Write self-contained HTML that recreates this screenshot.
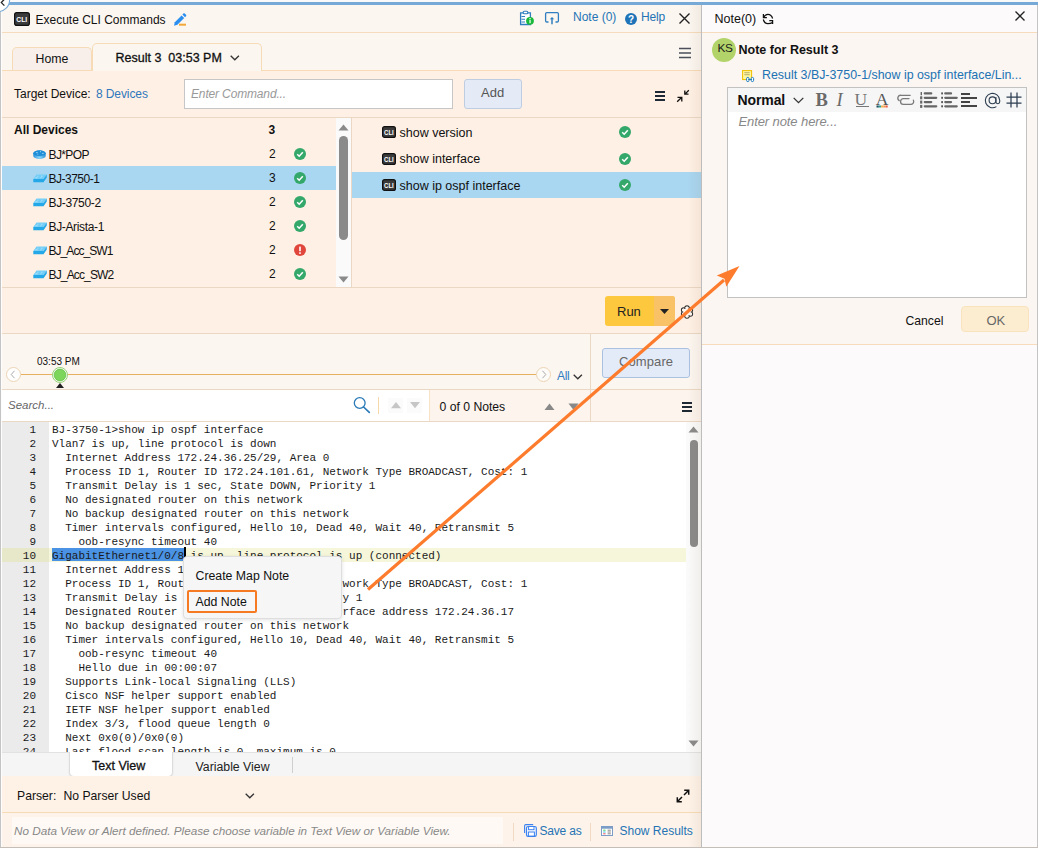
<!DOCTYPE html>
<html><head><meta charset="utf-8">
<style>
*{box-sizing:border-box;margin:0;padding:0}
html,body{width:1038px;height:848px;overflow:hidden;background:#fff;font-family:"Liberation Sans",sans-serif;font-size:12px;color:#1a1a1a;position:relative}
.a{position:absolute}
.t{position:absolute;white-space:pre;line-height:1}
svg{position:absolute;overflow:visible}
</style></head><body>
<div class="a" style="left:0px;top:0px;width:1038px;height:2px;background:#f9f9f9;"></div>
<div class="a" style="left:0px;top:2px;width:1038px;height:3px;background:#77a9d6;"></div>
<div class="a" style="left:0px;top:5px;width:702px;height:843px;background:#fbf6f0;"></div>
<div class="a" style="left:0px;top:5px;width:1px;height:843px;background:#c4c4c4;"></div>
<div class="a" style="left:1px;top:5px;width:1px;height:843px;background:#fdfdfd;"></div>
<div class="a" style="left:2px;top:32px;width:699px;height:1px;background:#f6dcbc;"></div>
<svg style="left:14px;top:12px" width="16" height="14" viewBox="0 0 16 14"><rect x="0.6" y="0.6" width="14.8" height="12.8" rx="2.2" fill="#3b3b3b" stroke="#111" stroke-width="1.2"/><text x="2.3" y="10.1" font-family="Liberation Sans" font-weight="700" font-size="7.6" fill="#fff" textLength="10.9" lengthAdjust="spacingAndGlyphs">CLI</text></svg>
<div class="t" style="left:35.5px;top:14px;font-size:12px;color:#111;font-weight:400;font-style:normal;letter-spacing:0px;font-family:'Liberation Sans';">Execute CLI Commands</div>
<svg style="left:173px;top:12.7px" width="14" height="14" viewBox="0 0 14 14"><path d="M1 12.7 L1.8 9.2 L8.6 2.4 L11.2 5 L4.4 11.8Z" fill="#2b8ff0"/><path d="M9.4 1.6 L10.4 0.6 A1 1 0 0 1 11.8 0.6 L13 1.8 A1 1 0 0 1 13 3.2 L12 4.2Z" fill="#2b8ff0"/><rect x="6" y="10.7" width="7" height="2" fill="#f2a93b"/></svg>
<svg style="left:519px;top:10px" width="16" height="16" viewBox="0 0 16 16"><path d="M1.6 2.8 H11.4 V14.5 H1.6Z" fill="#fff" stroke="#2f7fc0" stroke-width="1.3"/><rect x="4.2" y="1.2" width="4.6" height="2.6" rx="1" fill="#fff" stroke="#2f7fc0" stroke-width="1.1"/><path d="M2.5 6.5h3.5M2.5 9.3h3.5M2.5 12h3.5" stroke="#2f7fc0" stroke-width="1.1"/><circle cx="11" cy="10.8" r="3.9" fill="#19b83a"/><rect x="10.4" y="9.8" width="1.3" height="3.4" fill="#e8ffe8"/><rect x="10.4" y="8" width="1.3" height="1.1" fill="#e8ffe8"/></svg>
<svg style="left:545px;top:12px" width="14" height="13" viewBox="0 0 14 13"><path d="M3.5 10 H1.8 A1.2 1.2 0 0 1 0.6 8.8 V1.8 A1.2 1.2 0 0 1 1.8 0.6 H12.2 A1.2 1.2 0 0 1 13.4 1.8 V8.8 A1.2 1.2 0 0 1 12.2 10 H10.5" fill="none" stroke="#2f7fc0" stroke-width="1.3"/><path d="M7 12.2 V6" stroke="#2f7fc0" stroke-width="1.5"/><path d="M4.8 7.3 L7 5 L9.2 7.3Z" fill="#2f7fc0"/></svg>
<div class="t" style="left:573px;top:11px;font-size:12px;color:#2474b5;font-weight:400;font-style:normal;letter-spacing:0px;font-family:'Liberation Sans';">Note (0)</div>
<svg style="left:625px;top:12.5px" width="12" height="12" viewBox="0 0 12 12"><circle cx="6" cy="6" r="6" fill="#1f74b8"/><text x="6" y="10" font-size="10" font-weight="700" text-anchor="middle" fill="#fff" font-family="Liberation Sans">?</text></svg>
<div class="t" style="left:641px;top:11px;font-size:12px;color:#2474b5;font-weight:400;font-style:normal;letter-spacing:-0.2px;font-family:'Liberation Sans';">Help</div>
<svg style="left:679px;top:13px" width="11" height="11" viewBox="0 0 11 11"><path d="M0.5 0.5L10.5 10.5M10.5 0.5L0.5 10.5" stroke="#222" stroke-width="1.4"/></svg>
<div class="a" style="left:12px;top:47px;width:80px;height:24px;background:#f8efea;border:1.5px solid #f7dbb7;border-bottom:none;border-radius:5px 5px 0 0"></div>
<div class="t" style="left:35.5px;top:53px;font-size:12.3px;color:#111;font-weight:400;font-style:normal;letter-spacing:0px;font-family:'Liberation Sans';">Home</div>
<div class="a" style="left:2px;top:70px;width:91px;height:1px;background:#f7dbb7;"></div>
<div class="a" style="left:92px;top:43px;width:170px;height:28px;background:#fcf6f0;border:1.5px solid #f7dbb7;border-bottom:none;border-radius:5px 5px 0 0"></div>
<div class="t" style="left:115.5px;top:52px;font-size:12.5px;color:#111;font-weight:400;font-style:normal;letter-spacing:0px;font-family:'Liberation Sans';-webkit-text-stroke:0.3px #111">Result 3  03:53 PM</div>
<svg style="left:230px;top:55px" width="10" height="6" viewBox="0 0 10 6"><path d="M0.7 0.7L4.8 4.8L8.9 0.7" fill="none" stroke="#333" stroke-width="1.3"/></svg>
<svg style="left:679px;top:47px" width="12" height="12" viewBox="0 0 12 12"><path d="M0 1.5H12M0 6H12M0 10.5H12" stroke="#4a4f5a" stroke-width="1.3"/></svg>
<div class="a" style="left:2px;top:71px;width:699px;height:217px;background:#fef0e4;"></div>
<div class="a" style="left:262px;top:70px;width:439px;height:1px;background:#f7dbb7;"></div>
<div class="t" style="left:14px;top:88px;font-size:12px;color:#111;font-weight:400;font-style:normal;letter-spacing:0px;font-family:'Liberation Sans';">Target Device:</div>
<div class="t" style="left:96px;top:88px;font-size:12px;color:#2f78bd;font-weight:400;font-style:normal;letter-spacing:-0.1px;font-family:'Liberation Sans';">8 Devices</div>
<div class="a" style="left:184px;top:79px;width:269px;height:30px;background:#fff;border:1px solid #c6c6c6"></div>
<div class="t" style="left:191px;top:87.5px;font-size:12px;color:#999;font-weight:400;font-style:italic;letter-spacing:-0.15px;font-family:'Liberation Sans';">Enter Command...</div>
<div class="a" style="left:464px;top:79px;width:58px;height:30px;background:#e4ebf7;border:1px solid #bfcde2;border-radius:3px"></div>
<div class="t" style="left:481px;top:85.5px;font-size:13px;color:#555;font-weight:400;font-style:normal;letter-spacing:0px;font-family:'Liberation Sans';">Add</div>
<svg style="left:655px;top:91px" width="10" height="10" viewBox="0 0 10 10"><path d="M0 1H10M0 5H10M0 9H10" stroke="#1e2a38" stroke-width="2"/></svg>
<svg style="left:676px;top:89px" width="14" height="14" viewBox="0 0 14 14"><g fill="none" stroke="#111" stroke-width="1.3"><path d="M12.8 1.3L9 5.1M8.8 1.5V5.2H12.5"/><path d="M1.2 12.7L5.5 8.5M1.5 8.3H5.8V12.5"/></g></svg>
<div class="a" style="left:2px;top:117px;width:699px;height:1px;background:#ead8c4;"></div>
<div class="a" style="left:2px;top:287px;width:699px;height:1px;background:#ead8c4;"></div>
<div class="a" style="left:336px;top:118px;width:15px;height:169px;background:#fafafa;"></div>
<div class="a" style="left:351px;top:118px;width:1px;height:169px;background:#ead8c4;"></div>
<svg style="left:338px;top:124px" width="11" height="7" viewBox="0 0 11 7"><path d="M0.5 6.5L5.5 0.5L10.5 6.5Z" fill="#8a8a8a"/></svg>
<div class="a" style="left:339px;top:136px;width:9px;height:104px;background:#8a8a8a;border-radius:4.5px"></div>
<svg style="left:338px;top:276px" width="11" height="7" viewBox="0 0 11 7"><path d="M0.5 0.5L5.5 6.5L10.5 0.5Z" fill="#8a8a8a"/></svg>
<div class="a" style="left:2px;top:166px;width:334px;height:24px;background:#a9d6f1;"></div>
<div class="t" style="left:14px;top:124px;font-size:12px;color:#111;font-weight:700;font-style:normal;letter-spacing:0px;font-family:'Liberation Sans';">All Devices</div>
<div class="t" style="left:268.5px;top:123.5px;font-size:12px;color:#111;font-weight:700;font-style:normal;letter-spacing:0px;font-family:'Liberation Sans';">3</div>
<svg style="left:33.4px;top:149.5px" width="13" height="10" viewBox="0 0 13 10"><defs><radialGradient id="rg" cx="0.5" cy="0.85" r="0.6"><stop offset="0" stop-color="#8ad6fa"/><stop offset="1" stop-color="#1f8ad6"/></radialGradient></defs><path d="M0.3 3.2 A6.2 2.9 0 0 1 12.7 3.2 V5.9 A6.2 3 0 0 1 0.3 5.9Z" fill="url(#rg)"/><ellipse cx="6.5" cy="3.3" rx="6.1" ry="2.8" fill="#1f8ed8"/><path d="M3.2 2.6H4.6M7 1.7H7.9M9.2 3.4H10.6M4.5 4.2H5.2" stroke="#cfeeff" stroke-width="0.8"/></svg>
<div class="t" style="left:48.5px;top:148.5px;font-size:12px;color:#111;font-weight:400;font-style:normal;letter-spacing:-0.6px;font-family:'Liberation Sans';">BJ*POP</div>
<div class="t" style="left:269px;top:148.0px;font-size:12px;color:#111;font-weight:400;font-style:normal;letter-spacing:0px;font-family:'Liberation Sans';">2</div>
<svg style="left:294px;top:147.5px" width="12" height="12" viewBox="0 0 12 12"><circle cx="6" cy="6" r="6" fill="#34a86a"/><path d="M3.2 6.3L5.2 8.2L8.8 4.2" fill="none" stroke="#fff" stroke-width="1.5"/></svg>
<svg style="left:33px;top:174.0px" width="14" height="9" viewBox="0 0 14 9"><path d="M3.5 0.5 H13.8 L10.5 5 H0.3Z" fill="#72cdf6"/><path d="M0.3 5 H10.5 L13.8 0.5 V3.6 L10.5 8.3 H0.3Z" fill="#24a8e8"/><path d="M4.3 2.2 H5.3 M8 2.2 H9.5 M2.5 3.8 H4.5 M7.5 3.8 H8.3" stroke="#bfeaff" stroke-width="0.8"/></svg>
<div class="t" style="left:48.5px;top:172.5px;font-size:12px;color:#111;font-weight:400;font-style:normal;letter-spacing:-0.5px;font-family:'Liberation Sans';">BJ-3750-1</div>
<div class="t" style="left:269px;top:172.0px;font-size:12px;color:#111;font-weight:400;font-style:normal;letter-spacing:0px;font-family:'Liberation Sans';">3</div>
<svg style="left:294px;top:171.5px" width="12" height="12" viewBox="0 0 12 12"><circle cx="6" cy="6" r="6" fill="#34a86a"/><path d="M3.2 6.3L5.2 8.2L8.8 4.2" fill="none" stroke="#fff" stroke-width="1.5"/></svg>
<svg style="left:33px;top:198.0px" width="14" height="9" viewBox="0 0 14 9"><path d="M3.5 0.5 H13.8 L10.5 5 H0.3Z" fill="#72cdf6"/><path d="M0.3 5 H10.5 L13.8 0.5 V3.6 L10.5 8.3 H0.3Z" fill="#24a8e8"/><path d="M4.3 2.2 H5.3 M8 2.2 H9.5 M2.5 3.8 H4.5 M7.5 3.8 H8.3" stroke="#bfeaff" stroke-width="0.8"/></svg>
<div class="t" style="left:48.5px;top:196.5px;font-size:12px;color:#111;font-weight:400;font-style:normal;letter-spacing:-0.35px;font-family:'Liberation Sans';">BJ-3750-2</div>
<div class="t" style="left:269px;top:196.0px;font-size:12px;color:#111;font-weight:400;font-style:normal;letter-spacing:0px;font-family:'Liberation Sans';">2</div>
<svg style="left:294px;top:195.5px" width="12" height="12" viewBox="0 0 12 12"><circle cx="6" cy="6" r="6" fill="#34a86a"/><path d="M3.2 6.3L5.2 8.2L8.8 4.2" fill="none" stroke="#fff" stroke-width="1.5"/></svg>
<svg style="left:33px;top:222.0px" width="14" height="9" viewBox="0 0 14 9"><path d="M3.5 0.5 H13.8 L10.5 5 H0.3Z" fill="#72cdf6"/><path d="M0.3 5 H10.5 L13.8 0.5 V3.6 L10.5 8.3 H0.3Z" fill="#24a8e8"/><path d="M4.3 2.2 H5.3 M8 2.2 H9.5 M2.5 3.8 H4.5 M7.5 3.8 H8.3" stroke="#bfeaff" stroke-width="0.8"/></svg>
<div class="t" style="left:48.5px;top:220.5px;font-size:12px;color:#111;font-weight:400;font-style:normal;letter-spacing:-0.35px;font-family:'Liberation Sans';">BJ-Arista-1</div>
<div class="t" style="left:269px;top:220.0px;font-size:12px;color:#111;font-weight:400;font-style:normal;letter-spacing:0px;font-family:'Liberation Sans';">2</div>
<svg style="left:294px;top:219.5px" width="12" height="12" viewBox="0 0 12 12"><circle cx="6" cy="6" r="6" fill="#34a86a"/><path d="M3.2 6.3L5.2 8.2L8.8 4.2" fill="none" stroke="#fff" stroke-width="1.5"/></svg>
<svg style="left:33px;top:246.0px" width="14" height="9" viewBox="0 0 14 9"><path d="M3.5 0.5 H13.8 L10.5 5 H0.3Z" fill="#72cdf6"/><path d="M0.3 5 H10.5 L13.8 0.5 V3.6 L10.5 8.3 H0.3Z" fill="#24a8e8"/><path d="M4.3 2.2 H5.3 M8 2.2 H9.5 M2.5 3.8 H4.5 M7.5 3.8 H8.3" stroke="#bfeaff" stroke-width="0.8"/></svg>
<div class="t" style="left:48.5px;top:244.5px;font-size:12px;color:#111;font-weight:400;font-style:normal;letter-spacing:-0.95px;font-family:'Liberation Sans';">BJ_Acc_SW1</div>
<div class="t" style="left:269px;top:244.0px;font-size:12px;color:#111;font-weight:400;font-style:normal;letter-spacing:0px;font-family:'Liberation Sans';">2</div>
<svg style="left:294px;top:243.5px" width="12" height="12" viewBox="0 0 12 12"><circle cx="6" cy="6" r="6" fill="#e0463c"/><rect x="5.2" y="2.5" width="1.6" height="4.8" rx="0.5" fill="#fff"/><rect x="5.2" y="8.3" width="1.6" height="1.6" fill="#fff"/></svg>
<svg style="left:33px;top:270.0px" width="14" height="9" viewBox="0 0 14 9"><path d="M3.5 0.5 H13.8 L10.5 5 H0.3Z" fill="#72cdf6"/><path d="M0.3 5 H10.5 L13.8 0.5 V3.6 L10.5 8.3 H0.3Z" fill="#24a8e8"/><path d="M4.3 2.2 H5.3 M8 2.2 H9.5 M2.5 3.8 H4.5 M7.5 3.8 H8.3" stroke="#bfeaff" stroke-width="0.8"/></svg>
<div class="t" style="left:48.5px;top:268.5px;font-size:12px;color:#111;font-weight:400;font-style:normal;letter-spacing:-0.85px;font-family:'Liberation Sans';">BJ_Acc_SW2</div>
<div class="t" style="left:269px;top:268.0px;font-size:12px;color:#111;font-weight:400;font-style:normal;letter-spacing:0px;font-family:'Liberation Sans';">2</div>
<svg style="left:294px;top:267.5px" width="12" height="12" viewBox="0 0 12 12"><circle cx="6" cy="6" r="6" fill="#34a86a"/><path d="M3.2 6.3L5.2 8.2L8.8 4.2" fill="none" stroke="#fff" stroke-width="1.5"/></svg>
<div class="a" style="left:352px;top:172px;width:349px;height:26px;background:#a9d6f1;"></div>
<svg style="left:382px;top:126.0px" width="14" height="12" viewBox="0 0 14 12"><rect x="0.6" y="0.6" width="12.8" height="10.8" rx="2" fill="#3b3b3b" stroke="#111" stroke-width="1.2"/><text x="2.1" y="8.7" font-family="Liberation Sans" font-weight="700" font-size="6.8" fill="#fff" textLength="9.6" lengthAdjust="spacingAndGlyphs">CLI</text></svg>
<div class="t" style="left:399.5px;top:126.7px;font-size:12.5px;color:#111;font-weight:400;font-style:normal;letter-spacing:0px;font-family:'Liberation Sans';">show version</div>
<svg style="left:619px;top:126.0px" width="12" height="12" viewBox="0 0 12 12"><circle cx="6" cy="6" r="6" fill="#34a86a"/><path d="M3.2 6.3L5.2 8.2L8.8 4.2" fill="none" stroke="#fff" stroke-width="1.5"/></svg>
<svg style="left:382px;top:152.5px" width="14" height="12" viewBox="0 0 14 12"><rect x="0.6" y="0.6" width="12.8" height="10.8" rx="2" fill="#3b3b3b" stroke="#111" stroke-width="1.2"/><text x="2.1" y="8.7" font-family="Liberation Sans" font-weight="700" font-size="6.8" fill="#fff" textLength="9.6" lengthAdjust="spacingAndGlyphs">CLI</text></svg>
<div class="t" style="left:399.5px;top:153.2px;font-size:12.5px;color:#111;font-weight:400;font-style:normal;letter-spacing:0px;font-family:'Liberation Sans';">show interface</div>
<svg style="left:619px;top:152.5px" width="12" height="12" viewBox="0 0 12 12"><circle cx="6" cy="6" r="6" fill="#34a86a"/><path d="M3.2 6.3L5.2 8.2L8.8 4.2" fill="none" stroke="#fff" stroke-width="1.5"/></svg>
<svg style="left:382px;top:179.0px" width="14" height="12" viewBox="0 0 14 12"><rect x="0.6" y="0.6" width="12.8" height="10.8" rx="2" fill="#3b3b3b" stroke="#111" stroke-width="1.2"/><text x="2.1" y="8.7" font-family="Liberation Sans" font-weight="700" font-size="6.8" fill="#fff" textLength="9.6" lengthAdjust="spacingAndGlyphs">CLI</text></svg>
<div class="t" style="left:399.5px;top:179.7px;font-size:12.5px;color:#111;font-weight:400;font-style:normal;letter-spacing:0px;font-family:'Liberation Sans';">show ip ospf interface</div>
<svg style="left:619px;top:179.0px" width="12" height="12" viewBox="0 0 12 12"><circle cx="6" cy="6" r="6" fill="#34a86a"/><path d="M3.2 6.3L5.2 8.2L8.8 4.2" fill="none" stroke="#fff" stroke-width="1.5"/></svg>
<div class="a" style="left:2px;top:288px;width:699px;height:45px;background:#fef0e4;"></div>
<div class="a" style="left:605px;top:296px;width:70px;height:30px;background:#fdc83d;border-radius:3px"></div>
<div class="a" style="left:654px;top:296px;width:21px;height:30px;background:#f9c266;border-radius:0 3px 3px 0"></div>
<div class="t" style="left:617px;top:304.5px;font-size:13px;color:#222;font-weight:400;font-style:normal;letter-spacing:0px;font-family:'Liberation Sans';">Run</div>
<svg style="left:660px;top:309px" width="9" height="5" viewBox="0 0 9 5"><path d="M0 0H9L4.5 5Z" fill="#222"/></svg>
<svg style="left:680px;top:305px" width="14" height="14" viewBox="0 0 14 14"><circle cx="7.00" cy="3.10" r="2.2" fill="none" stroke="#333" stroke-width="1.1"/><circle cx="3.62" cy="5.05" r="2.2" fill="none" stroke="#333" stroke-width="1.1"/><circle cx="3.62" cy="8.95" r="2.2" fill="none" stroke="#333" stroke-width="1.1"/><circle cx="7.00" cy="10.90" r="2.2" fill="none" stroke="#333" stroke-width="1.1"/><circle cx="10.38" cy="8.95" r="2.2" fill="none" stroke="#333" stroke-width="1.1"/><circle cx="10.38" cy="5.05" r="2.2" fill="none" stroke="#333" stroke-width="1.1"/><circle cx="7.00" cy="3.10" r="1.65" fill="#fdf6ee"/><circle cx="3.62" cy="5.05" r="1.65" fill="#fdf6ee"/><circle cx="3.62" cy="8.95" r="1.65" fill="#fdf6ee"/><circle cx="7.00" cy="10.90" r="1.65" fill="#fdf6ee"/><circle cx="10.38" cy="8.95" r="1.65" fill="#fdf6ee"/><circle cx="10.38" cy="5.05" r="1.65" fill="#fdf6ee"/><circle cx="7" cy="7" r="3.6" fill="#fdf6ee"/></svg>
<div class="a" style="left:2px;top:333px;width:699px;height:1px;background:#ead8c4;"></div>
<div class="a" style="left:2px;top:334px;width:699px;height:55px;background:#fcf6f0;"></div>
<div class="a" style="left:590px;top:334px;width:1px;height:88px;background:#ead8c4;"></div>
<div class="t" style="left:37px;top:356.5px;font-size:10px;color:#111;font-weight:400;font-style:normal;letter-spacing:0px;font-family:'Liberation Sans';">03:53 PM</div>
<div class="a" style="left:6px;top:367px;width:15px;height:15px;background:#fff;border:1px solid #ecd4b4;border-radius:50%"></div>
<svg style="left:10px;top:370px" width="6" height="9" viewBox="0 0 6 9"><path d="M4.5 0.8L1.2 4.5L4.5 8.2" fill="none" stroke="#aaa" stroke-width="1"/></svg>
<div class="a" style="left:21px;top:374px;width:515px;height:1px;background:#e6b060;"></div>
<div class="a" style="left:536px;top:367px;width:15px;height:15px;background:#fdfbf8;border:1px solid #ecd4b4;border-radius:50%"></div>
<svg style="left:541px;top:370px" width="6" height="9" viewBox="0 0 6 9"><path d="M1.5 0.8L4.8 4.5L1.5 8.2" fill="none" stroke="#aaa" stroke-width="1"/></svg>
<svg style="left:51px;top:365.5px" width="18" height="18" viewBox="0 0 18 18"><circle cx="9" cy="9" r="7.5" fill="#fdfdfb" stroke="#95d277" stroke-width="1"/><circle cx="9" cy="9" r="5.9" fill="#7dd65c" stroke="#5cba3e" stroke-width="0.7"/></svg>
<svg style="left:56px;top:383px" width="8" height="5" viewBox="0 0 8 5"><path d="M0 5H8L4 0Z" fill="#222"/></svg>
<div class="t" style="left:557px;top:369.5px;font-size:12px;color:#2f7cc2;font-weight:400;font-style:normal;letter-spacing:-0.3px;font-family:'Liberation Sans';">All</div>
<svg style="left:573px;top:374px" width="10" height="6" viewBox="0 0 10 6"><path d="M0.7 0.7L4.8 4.8L8.9 0.7" fill="none" stroke="#333" stroke-width="1.3"/></svg>
<div class="a" style="left:602px;top:348px;width:88px;height:30px;background:#e4ebf8;border:1px solid #aac1e2;border-radius:3px"></div>
<div class="t" style="left:619px;top:354.5px;font-size:13px;color:#666;font-weight:400;font-style:normal;letter-spacing:0.1px;font-family:'Liberation Sans';">Compare</div>
<div class="a" style="left:2px;top:389px;width:699px;height:1px;background:#ead8c4;"></div>
<div class="a" style="left:2px;top:390px;width:428px;height:31px;background:#fff;"></div>
<div class="a" style="left:430px;top:390px;width:271px;height:31px;background:#fcf4ed;"></div>
<div class="a" style="left:590px;top:390px;width:1px;height:31px;background:#ead8c4;"></div>
<div class="t" style="left:8px;top:400px;font-size:11.5px;color:#666;font-weight:400;font-style:italic;letter-spacing:0px;font-family:'Liberation Sans';">Search...</div>
<svg style="left:352px;top:395px" width="20" height="20" viewBox="0 0 20 20"><circle cx="7.7" cy="8" r="5.4" fill="none" stroke="#2a7ab8" stroke-width="1.3"/><path d="M11.6 12 L17.3 17.3" stroke="#2a7ab8" stroke-width="1.7" stroke-linecap="round"/></svg>
<div class="a" style="left:378px;top:397px;width:1px;height:17px;background:#f5d9a8;"></div>
<div class="a" style="left:388px;top:398px;width:15px;height:15px;background:#fbfbfb;"></div>
<div class="a" style="left:407px;top:398px;width:15px;height:15px;background:#fbfbfb;"></div>
<svg style="left:391px;top:401.5px" width="10" height="7" viewBox="0 0 10 7"><path d="M0 6.3L5 0L10 6.3Z" fill="#c6c6c6"/></svg>
<svg style="left:410px;top:402px" width="10" height="7" viewBox="0 0 10 7"><path d="M0 0L5 6.3L10 0Z" fill="#c6c6c6"/></svg>
<div class="a" style="left:429px;top:390px;width:1px;height:31px;background:#f8e2c6;"></div>
<div class="t" style="left:439.5px;top:400.7px;font-size:12.2px;color:#111;font-weight:400;font-style:normal;letter-spacing:0px;font-family:'Liberation Sans';">0 of 0 Notes</div>
<svg style="left:544px;top:403px" width="11" height="7" viewBox="0 0 11 7"><path d="M0.5 7L5.5 0.5L10.5 7Z" fill="#888"/></svg>
<svg style="left:568px;top:403px" width="11" height="7" viewBox="0 0 11 7"><path d="M0.5 0.5L5.5 7L10.5 0.5Z" fill="#888"/></svg>
<svg style="left:682px;top:402px" width="10" height="10" viewBox="0 0 10 10"><path d="M0 1H10M0 5H10M0 9H10" stroke="#1e2832" stroke-width="2"/></svg>
<div class="a" style="left:2px;top:421px;width:699px;height:1px;background:#ead8c4;"></div>
<div class="a" style="left:2px;top:422px;width:699px;height:330px;background:#fff;"></div>
<div class="a" style="left:2px;top:422px;width:47px;height:330px;background:#ebebeb;"></div>
<div class="a" style="left:2px;top:548px;width:47px;height:14px;background:#e7e7c9;"></div>
<div class="a" style="left:49px;top:548px;width:637px;height:14px;background:#f6f6da;"></div>
<div class="a" style="left:52px;top:548px;width:132px;height:13px;background:#4a92e3;"></div>
<div class="a" style="left:2px;top:422.5px;width:684px;height:330px;overflow:hidden">
<div class="t" style="left:0;width:34px;text-align:right;top:0px;font-family:'Liberation Mono';font-size:11px;line-height:14px;color:#1a1a1a">1</div>
<div class="t" style="left:50px;top:0px;font-family:'Liberation Mono';font-size:11px;line-height:14px;color:#1a1a1a">BJ-3750-1&gt;show ip ospf interface</div>
<div class="t" style="left:0;width:34px;text-align:right;top:14px;font-family:'Liberation Mono';font-size:11px;line-height:14px;color:#1a1a1a">2</div>
<div class="t" style="left:50px;top:14px;font-family:'Liberation Mono';font-size:11px;line-height:14px;color:#1a1a1a">Vlan7 is up, line protocol is down</div>
<div class="t" style="left:0;width:34px;text-align:right;top:28px;font-family:'Liberation Mono';font-size:11px;line-height:14px;color:#1a1a1a">3</div>
<div class="t" style="left:50px;top:28px;font-family:'Liberation Mono';font-size:11px;line-height:14px;color:#1a1a1a">  Internet Address 172.24.36.25/29, Area 0</div>
<div class="t" style="left:0;width:34px;text-align:right;top:42px;font-family:'Liberation Mono';font-size:11px;line-height:14px;color:#1a1a1a">4</div>
<div class="t" style="left:50px;top:42px;font-family:'Liberation Mono';font-size:11px;line-height:14px;color:#1a1a1a">  Process ID 1, Router ID 172.24.101.61, Network Type BROADCAST, Cost: 1</div>
<div class="t" style="left:0;width:34px;text-align:right;top:56px;font-family:'Liberation Mono';font-size:11px;line-height:14px;color:#1a1a1a">5</div>
<div class="t" style="left:50px;top:56px;font-family:'Liberation Mono';font-size:11px;line-height:14px;color:#1a1a1a">  Transmit Delay is 1 sec, State DOWN, Priority 1</div>
<div class="t" style="left:0;width:34px;text-align:right;top:70px;font-family:'Liberation Mono';font-size:11px;line-height:14px;color:#1a1a1a">6</div>
<div class="t" style="left:50px;top:70px;font-family:'Liberation Mono';font-size:11px;line-height:14px;color:#1a1a1a">  No designated router on this network</div>
<div class="t" style="left:0;width:34px;text-align:right;top:84px;font-family:'Liberation Mono';font-size:11px;line-height:14px;color:#1a1a1a">7</div>
<div class="t" style="left:50px;top:84px;font-family:'Liberation Mono';font-size:11px;line-height:14px;color:#1a1a1a">  No backup designated router on this network</div>
<div class="t" style="left:0;width:34px;text-align:right;top:98px;font-family:'Liberation Mono';font-size:11px;line-height:14px;color:#1a1a1a">8</div>
<div class="t" style="left:50px;top:98px;font-family:'Liberation Mono';font-size:11px;line-height:14px;color:#1a1a1a">  Timer intervals configured, Hello 10, Dead 40, Wait 40, Retransmit 5</div>
<div class="t" style="left:0;width:34px;text-align:right;top:112px;font-family:'Liberation Mono';font-size:11px;line-height:14px;color:#1a1a1a">9</div>
<div class="t" style="left:50px;top:112px;font-family:'Liberation Mono';font-size:11px;line-height:14px;color:#1a1a1a">    oob-resync timeout 40</div>
<div class="t" style="left:0;width:34px;text-align:right;top:126px;font-family:'Liberation Mono';font-size:11px;line-height:14px;color:#1a1a1a">10</div>
<div class="t" style="left:50px;top:126px;font-family:'Liberation Mono';font-size:11px;line-height:14px;color:#1a1a1a">GigabitEthernet1/0/8 is up, line protocol is up (connected)</div>
<div class="t" style="left:0;width:34px;text-align:right;top:140px;font-family:'Liberation Mono';font-size:11px;line-height:14px;color:#1a1a1a">11</div>
<div class="t" style="left:50px;top:140px;font-family:'Liberation Mono';font-size:11px;line-height:14px;color:#1a1a1a">  Internet Address 172.24.36.17/29, Area 0</div>
<div class="t" style="left:0;width:34px;text-align:right;top:154px;font-family:'Liberation Mono';font-size:11px;line-height:14px;color:#1a1a1a">12</div>
<div class="t" style="left:50px;top:154px;font-family:'Liberation Mono';font-size:11px;line-height:14px;color:#1a1a1a">  Process ID 1, Router ID 172.24.101.61, Network Type BROADCAST, Cost: 1</div>
<div class="t" style="left:0;width:34px;text-align:right;top:168px;font-family:'Liberation Mono';font-size:11px;line-height:14px;color:#1a1a1a">13</div>
<div class="t" style="left:50px;top:168px;font-family:'Liberation Mono';font-size:11px;line-height:14px;color:#1a1a1a">  Transmit Delay is 1 sec, State DR, Priority 1</div>
<div class="t" style="left:0;width:34px;text-align:right;top:182px;font-family:'Liberation Mono';font-size:11px;line-height:14px;color:#1a1a1a">14</div>
<div class="t" style="left:50px;top:182px;font-family:'Liberation Mono';font-size:11px;line-height:14px;color:#1a1a1a">  Designated Router (ID) 172.24.101.61, Interface address 172.24.36.17</div>
<div class="t" style="left:0;width:34px;text-align:right;top:196px;font-family:'Liberation Mono';font-size:11px;line-height:14px;color:#1a1a1a">15</div>
<div class="t" style="left:50px;top:196px;font-family:'Liberation Mono';font-size:11px;line-height:14px;color:#1a1a1a">  No backup designated router on this network</div>
<div class="t" style="left:0;width:34px;text-align:right;top:210px;font-family:'Liberation Mono';font-size:11px;line-height:14px;color:#1a1a1a">16</div>
<div class="t" style="left:50px;top:210px;font-family:'Liberation Mono';font-size:11px;line-height:14px;color:#1a1a1a">  Timer intervals configured, Hello 10, Dead 40, Wait 40, Retransmit 5</div>
<div class="t" style="left:0;width:34px;text-align:right;top:224px;font-family:'Liberation Mono';font-size:11px;line-height:14px;color:#1a1a1a">17</div>
<div class="t" style="left:50px;top:224px;font-family:'Liberation Mono';font-size:11px;line-height:14px;color:#1a1a1a">    oob-resync timeout 40</div>
<div class="t" style="left:0;width:34px;text-align:right;top:238px;font-family:'Liberation Mono';font-size:11px;line-height:14px;color:#1a1a1a">18</div>
<div class="t" style="left:50px;top:238px;font-family:'Liberation Mono';font-size:11px;line-height:14px;color:#1a1a1a">    Hello due in 00:00:07</div>
<div class="t" style="left:0;width:34px;text-align:right;top:252px;font-family:'Liberation Mono';font-size:11px;line-height:14px;color:#1a1a1a">19</div>
<div class="t" style="left:50px;top:252px;font-family:'Liberation Mono';font-size:11px;line-height:14px;color:#1a1a1a">  Supports Link-local Signaling (LLS)</div>
<div class="t" style="left:0;width:34px;text-align:right;top:266px;font-family:'Liberation Mono';font-size:11px;line-height:14px;color:#1a1a1a">20</div>
<div class="t" style="left:50px;top:266px;font-family:'Liberation Mono';font-size:11px;line-height:14px;color:#1a1a1a">  Cisco NSF helper support enabled</div>
<div class="t" style="left:0;width:34px;text-align:right;top:280px;font-family:'Liberation Mono';font-size:11px;line-height:14px;color:#1a1a1a">21</div>
<div class="t" style="left:50px;top:280px;font-family:'Liberation Mono';font-size:11px;line-height:14px;color:#1a1a1a">  IETF NSF helper support enabled</div>
<div class="t" style="left:0;width:34px;text-align:right;top:294px;font-family:'Liberation Mono';font-size:11px;line-height:14px;color:#1a1a1a">22</div>
<div class="t" style="left:50px;top:294px;font-family:'Liberation Mono';font-size:11px;line-height:14px;color:#1a1a1a">  Index 3/3, flood queue length 0</div>
<div class="t" style="left:0;width:34px;text-align:right;top:308px;font-family:'Liberation Mono';font-size:11px;line-height:14px;color:#1a1a1a">23</div>
<div class="t" style="left:50px;top:308px;font-family:'Liberation Mono';font-size:11px;line-height:14px;color:#1a1a1a">  Next 0x0(0)/0x0(0)</div>
<div class="t" style="left:0;width:34px;text-align:right;top:322px;font-family:'Liberation Mono';font-size:11px;line-height:14px;color:#1a1a1a">24</div>
<div class="t" style="left:50px;top:322px;font-family:'Liberation Mono';font-size:11px;line-height:14px;color:#1a1a1a">  Last flood scan length is 0, maximum is 0</div>
</div>
<div class="a" style="left:184px;top:547px;width:2px;height:15px;background:#000;"></div>
<div class="a" style="left:686px;top:422px;width:15px;height:330px;background:#fafafa;"></div>
<svg style="left:688px;top:426px" width="11" height="7" viewBox="0 0 11 7"><path d="M0.5 6.5L5.5 0.5L10.5 6.5Z" fill="#8a8a8a"/></svg>
<div class="a" style="left:690px;top:440px;width:8px;height:107px;background:#8a8a8a;border-radius:4px"></div>
<svg style="left:688px;top:740px" width="11" height="7" viewBox="0 0 11 7"><path d="M0.5 0.5L5.5 6.5L10.5 0.5Z" fill="#8a8a8a"/></svg>
<div class="a" style="left:183px;top:556px;width:159px;height:63px;background:#f6f6f6;border:1px solid #dedede;border-radius:4px;box-shadow:0 1px 4px rgba(0,0,0,.12)"></div>
<div class="t" style="left:195.5px;top:570px;font-size:12.3px;color:#111;font-weight:400;font-style:normal;letter-spacing:0px;font-family:'Liberation Sans';">Create Map Note</div>
<div class="a" style="left:187px;top:590px;width:70px;height:23px;background:transparent;border:2.5px solid #f57a22;border-radius:2px"></div>
<div class="t" style="left:195.5px;top:595.5px;font-size:12.3px;color:#111;font-weight:400;font-style:normal;letter-spacing:0px;font-family:'Liberation Sans';">Add Note</div>
<div class="a" style="left:2px;top:752px;width:699px;height:25px;background:#f5f5f5;"></div>
<div class="a" style="left:2px;top:752px;width:699px;height:1px;background:#e2e2e2;"></div>
<div class="a" style="left:69px;top:752px;width:104px;height:24.5px;background:#fff;border:1px solid #dcdcdc;border-top:none;border-radius:0 0 5px 5px;box-shadow:0 1px 2px rgba(0,0,0,.08)"></div>
<div class="t" style="left:92px;top:759.5px;font-size:12.5px;color:#111;font-weight:400;font-style:normal;letter-spacing:0px;font-family:'Liberation Sans';-webkit-text-stroke:0.3px #111">Text View</div>
<div class="t" style="left:195.5px;top:760.5px;font-size:12.3px;color:#222;font-weight:400;font-style:normal;letter-spacing:0px;font-family:'Liberation Sans';">Variable View</div>
<div class="a" style="left:292px;top:757px;width:1px;height:16px;background:#cfcfcf;"></div>
<div class="a" style="left:2px;top:776px;width:699px;height:36px;background:#fef2e7;"></div>
<div class="t" style="left:17px;top:790px;font-size:12.2px;color:#111;font-weight:400;font-style:normal;letter-spacing:0px;font-family:'Liberation Sans';">Parser:</div>
<div class="t" style="left:63.5px;top:790px;font-size:12.2px;color:#111;font-weight:400;font-style:normal;letter-spacing:0px;font-family:'Liberation Sans';">No Parser Used</div>
<svg style="left:245px;top:793px" width="10" height="6" viewBox="0 0 10 6"><path d="M0.7 0.7L4.8 4.8L8.9 0.7" fill="none" stroke="#333" stroke-width="1.3"/></svg>
<svg style="left:676px;top:789px" width="14" height="14" viewBox="0 0 14 14"><g fill="none" stroke="#111" stroke-width="1.5"><path d="M8 6L12.5 1.5M8.2 1.3H12.7V5.8"/><path d="M6 8L1.5 12.5M1.3 8.2V12.7H5.8"/></g></svg>
<div class="a" style="left:2px;top:812px;width:699px;height:1px;background:#f7dbb7;"></div>
<div class="a" style="left:2px;top:813px;width:699px;height:34px;background:#fdf3ea;"></div>
<div class="a" style="left:12px;top:817px;width:491px;height:27px;background:#fef9f4;"></div>
<div class="t" style="left:14px;top:825px;font-size:11.7px;color:#888;font-weight:400;font-style:italic;letter-spacing:0px;font-family:'Liberation Sans';">No Data View or Alert defined. Please choose variable in Text View or Variable View.</div>
<div class="a" style="left:513px;top:823px;width:1px;height:18px;background:#efd9c0;"></div>
<svg style="left:524px;top:824px" width="13" height="13" viewBox="0 0 13 13"><path d="M0.6 9 V1.8 A1.2 1.2 0 0 1 1.8 0.6 H9.2" fill="none" stroke="#3b82f0" stroke-width="1.1"/><rect x="2.5" y="2.5" width="9.8" height="9.8" rx="1.6" fill="#fff" stroke="#3b82f0" stroke-width="1.2"/><rect x="4.6" y="2.5" width="5.4" height="3.2" fill="none" stroke="#3b82f0" stroke-width="1"/><rect x="4.4" y="8" width="6" height="4.3" fill="none" stroke="#3b82f0" stroke-width="1"/></svg>
<div class="t" style="left:539.5px;top:824.5px;font-size:12px;color:#2474b5;font-weight:400;font-style:normal;letter-spacing:-0.2px;font-family:'Liberation Sans';">Save as</div>
<div class="a" style="left:590px;top:823px;width:1px;height:18px;background:#efd9c0;"></div>
<svg style="left:601px;top:826px" width="12" height="10" viewBox="0 0 12 10"><rect x="0.5" y="0.5" width="11" height="9" fill="#fff" stroke="#7a9cc6" stroke-width="1"/><rect x="0.5" y="0.5" width="11" height="2.2" fill="#7a9cc6"/><path d="M2.2 4.2H4.6" stroke="#2ecc40" stroke-width="0.9"/><path d="M2.2 6H4.6" stroke="#1fb8e8" stroke-width="0.9"/><path d="M2.2 7.8H4.6" stroke="#f04040" stroke-width="0.9"/><path d="M6.6 4.2H9.8M6.6 6H9.8M6.6 7.8H9.8" stroke="#777" stroke-width="0.9"/></svg>
<div class="t" style="left:619.5px;top:824.5px;font-size:12px;color:#2474b5;font-weight:400;font-style:normal;letter-spacing:0px;font-family:'Liberation Sans';">Show Results</div>
<div class="a" style="left:0px;top:847px;width:1038px;height:1px;background:#c0bab4;"></div>
<div class="a" style="left:688px;top:5px;width:13px;height:843px;background:linear-gradient(to right,rgba(120,80,40,0),rgba(120,80,40,0.07));"></div>
<div class="a" style="left:701px;top:5px;width:1px;height:843px;background:#bdbdbd;"></div>
<div class="a" style="left:702px;top:5px;width:335px;height:843px;background:#fcfafa;"></div>
<div class="a" style="left:702px;top:33px;width:335px;height:311px;background:#fbf6f1;"></div>
<div class="a" style="left:702px;top:5px;width:335px;height:27px;background:#fcfafa;"></div>
<div class="a" style="left:702px;top:32px;width:335px;height:1px;background:#f6dcbc;"></div>
<div class="a" style="left:1037px;top:5px;width:1px;height:843px;background:#c4c4c4;"></div>
<div class="t" style="left:714.5px;top:13px;font-size:12.5px;color:#111;font-weight:400;font-style:normal;letter-spacing:0px;font-family:'Liberation Sans';">Note(0)</div>
<svg style="left:762px;top:13px" width="12" height="12" viewBox="0 0 12 12"><g fill="none" stroke="#111" stroke-width="1.25"><path d="M1.4 0.9 V4.7 H4.9"/><path d="M1.6 4.5 Q3 1.3 5.9 1.3 Q9.4 1.3 10.6 5.5"/><path d="M1.3 6.5 Q2.4 10.6 5.9 10.6 Q8.6 10.6 10.4 9.6"/><path d="M7.3 7.6 H10.6 V10.9"/></g></svg>
<svg style="left:1015px;top:11px" width="10" height="10" viewBox="0 0 10 10"><path d="M0.5 0.5L9.5 9.5M9.5 0.5L0.5 9.5" stroke="#222" stroke-width="1.3"/></svg>
<div class="a" style="left:712px;top:38px;width:24px;height:24px;background:#b2d36a;border-radius:50%"></div>
<div class="t" style="left:717.5px;top:43.3px;font-size:11.8px;color:#1a1a1a;font-weight:400;font-style:normal;letter-spacing:-0.4px;font-family:'Liberation Sans';">KS</div>
<div class="t" style="left:738.5px;top:44px;font-size:12.5px;color:#111;font-weight:700;font-style:normal;letter-spacing:0px;font-family:'Liberation Sans';">Note for Result 3</div>
<svg style="left:742px;top:70px" width="13" height="13" viewBox="0 0 13 13"><rect x="0.55" y="0.55" width="9" height="9" fill="#fff6a0" stroke="#f2c40f" stroke-width="1.1"/><path d="M2.3 2.7H7.7M2.3 4.7H7.7" stroke="#aaa060" stroke-width="0.85"/><rect x="4.6" y="7.4" width="2.4" height="4.2" rx="1.2" fill="#fff" stroke="#1a7ac0" stroke-width="1"/><rect x="9.2" y="7.4" width="2.4" height="4.2" rx="1.2" fill="#fff" stroke="#1a7ac0" stroke-width="1"/><path d="M6.3 9.5H9.9" stroke="#1a7ac0" stroke-width="0.9"/></svg>
<div class="t" style="left:762px;top:69px;font-size:12.4px;color:#2072b4;font-weight:400;font-style:normal;letter-spacing:0px;font-family:'Liberation Sans';">Result 3/BJ-3750-1/show ip ospf interface/Lin...</div>
<div class="a" style="left:727px;top:87px;width:300px;height:211px;background:#fff;border:1px solid #c2c2c2"></div>
<div class="a" style="left:728px;top:88px;width:298px;height:24px;background:#f6f6f6;"></div>
<div class="t" style="left:737.5px;top:92.5px;font-size:14px;color:#111;font-weight:700;font-style:normal;letter-spacing:-0.1px;font-family:'Liberation Sans';">Normal</div>
<svg style="left:793px;top:97px" width="11" height="7" viewBox="0 0 11 7"><path d="M0.7 0.9L5.5 5.7L10.3 0.9" fill="none" stroke="#333" stroke-width="1.3"/></svg>
<div class="t" style="left:815.5px;top:90.5px;font-size:18.5px;color:#6a6a6a;font-weight:700;font-style:normal;letter-spacing:0px;font-family:'Liberation Serif';">B</div>
<div class="t" style="left:836.5px;top:90.5px;font-size:18.5px;color:#6a6a6a;font-weight:400;font-style:italic;letter-spacing:0px;font-family:'Liberation Serif';">I</div>
<div class="t" style="left:854.5px;top:90.5px;font-size:17.5px;color:#777;font-weight:400;font-style:normal;letter-spacing:0px;font-family:'Liberation Serif';">U</div>
<div class="a" style="left:855.5px;top:105.8px;width:13px;height:1px;background:#777;"></div>
<svg style="left:876px;top:92px" width="12" height="16" viewBox="0 0 12 16"><text x="6" y="12.8" font-family="Liberation Serif" font-size="17.5" text-anchor="middle" fill="#555">A</text><rect x="0.5" y="13.5" width="2.3" height="2" fill="#1d4f5e"/><rect x="2.8" y="13.5" width="2.3" height="2" fill="#2a9d8f"/><rect x="5.1" y="13.5" width="2.3" height="2" fill="#f2b14e"/><rect x="7.4" y="13.5" width="2.3" height="2" fill="#f39a4e"/><rect x="9.7" y="13.5" width="2" height="2" fill="#ee5a3e"/></svg>
<svg style="left:897px;top:94px" width="18" height="12" viewBox="0 0 18 12"><g fill="none" stroke="#7a7a7a" stroke-width="1.3" stroke-linecap="round"><path d="M13.2 1.3 H4.3 A2.9 2.9 0 0 0 2.2 6.6"/><path d="M12 4.6 H6.4 A2.85 2.85 0 0 0 6.4 10.3 H13 A2.9 2.9 0 0 0 16.4 6.2"/></g></svg>
<svg style="left:920px;top:91px" width="17" height="17" viewBox="0 0 17 17"><g fill="#666"><rect x="0.6" y="1" width="1.4" height="3.2"/><rect x="0.1" y="5.3" width="2.2" height="3"/><rect x="0.1" y="9.6" width="2.2" height="3"/><rect x="0.1" y="13.9" width="2.2" height="3"/></g><g stroke="#666" stroke-width="2.3" stroke-linecap="round"><path d="M4.8 2.4H11.2M4.8 6.8H16.2M4.8 11.1H11.2M4.8 15.3H16.2"/></g></svg>
<svg style="left:941px;top:91px" width="17" height="17" viewBox="0 0 17 17"><g fill="#555"><rect x="0.2" y="1.4" width="1.8" height="2"/><rect x="0.2" y="5.8" width="1.8" height="2"/><rect x="0.2" y="10.1" width="1.8" height="2"/><rect x="0.2" y="14.3" width="1.8" height="2"/></g><g stroke="#666" stroke-width="2.3" stroke-linecap="round"><path d="M4.3 2.4H10M4.3 6.8H15.7M4.3 11.1H10M4.3 15.3H15.7"/></g></svg>
<svg style="left:961px;top:92px" width="17" height="16" viewBox="0 0 17 16"><g stroke="#444" stroke-width="2.2"><path d="M0 2H9M0 6H16M0 10H9M0 14H16"/></g></svg>
<svg style="left:984px;top:92px" width="17" height="17" viewBox="0 0 17 17"><circle cx="8.5" cy="8.3" r="3.4" fill="none" stroke="#2d3e50" stroke-width="1.1"/><path d="M11.9 5 V9.8 A1.9 1.9 0 0 0 15.7 9.8 V8.3 A7.2 7.2 0 1 0 12.4 14.6" fill="none" stroke="#2d3e50" stroke-width="1.1"/></svg>
<svg style="left:1006px;top:92px" width="16" height="16" viewBox="0 0 16 16"><path d="M5 0.5V15.5M11 0.5V15.5M0.5 5H15.5M0.5 11H15.5" stroke="#2d3e50" stroke-width="1.25"/></svg>
<div class="t" style="left:738.5px;top:114.5px;font-size:13px;color:#888;font-weight:400;font-style:italic;letter-spacing:-0.1px;font-family:'Liberation Sans';">Enter note here...</div>
<div class="t" style="left:905.5px;top:315px;font-size:12.2px;color:#111;font-weight:400;font-style:normal;letter-spacing:0px;font-family:'Liberation Sans';">Cancel</div>
<div class="a" style="left:961px;top:306px;width:68px;height:26px;background:#fdedd0;border:1px solid #f9e3bf;border-radius:4px"></div>
<div class="t" style="left:986.5px;top:313.5px;font-size:13px;color:#666;font-weight:400;font-style:normal;letter-spacing:0px;font-family:'Liberation Sans';">OK</div>
<div class="a" style="left:702px;top:344px;width:335px;height:1px;background:#f6dcbc;"></div>
<svg style="left:0px;top:0px" width="14" height="14" viewBox="0 0 14 14"><circle cx="-2" cy="0" r="11.6" fill="#fff" stroke="#79a9d6" stroke-width="1.1"/><path d="M4.2 -0.5L1.3 2.6L4.4 5.6" fill="none" stroke="#222" stroke-width="1.3"/></svg>
<div class="a" style="left:0px;top:847px;width:1038px;height:1px;background:#c4beb8;"></div>
<svg style="left:0px;top:0px" width="1038" height="848" viewBox="0 0 1038 848"><line x1="368" y1="589.5" x2="724" y2="280" stroke="#fd7b2c" stroke-width="3.2"/><path d="M739.5 266 L716.8 275.5 L724.5 278.8 L726.3 286.7Z" fill="#fd7b2c"/></svg>
</body></html>
